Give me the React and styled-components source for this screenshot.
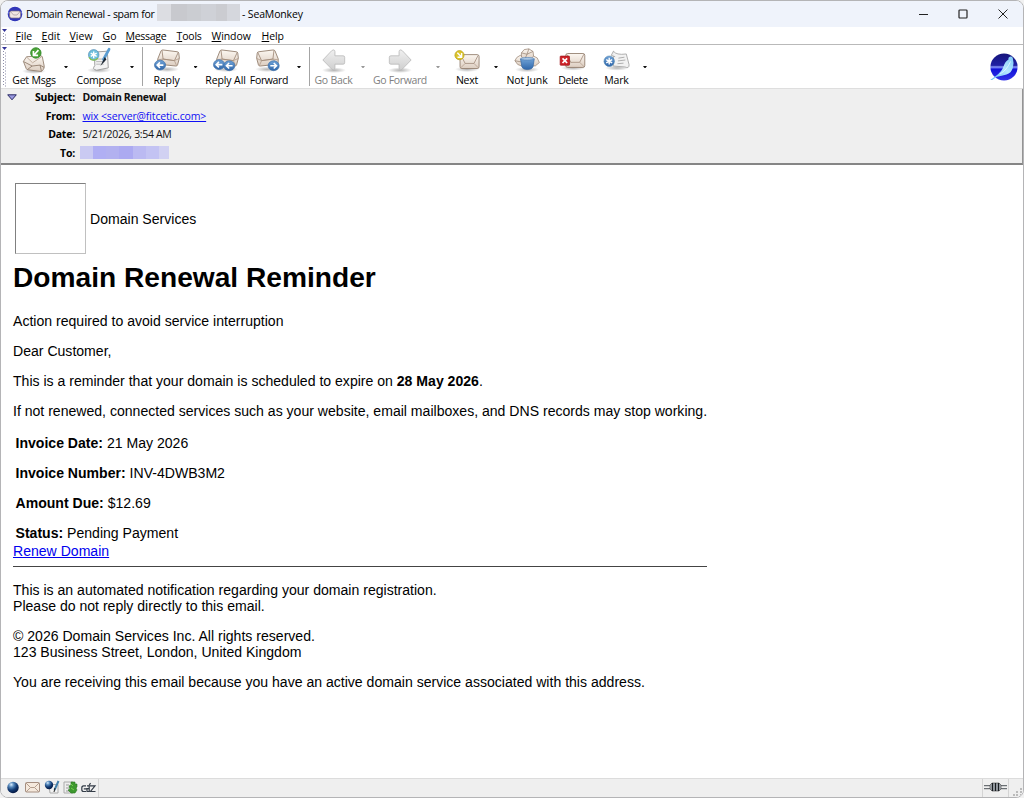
import React from "react";
import styled, { createGlobalStyle } from "styled-components";

const Global = createGlobalStyle`
  * { box-sizing: border-box; }
  html, body { margin: 0; background: #f1f1f1; }
  body { width: 1024px; height: 798px; overflow: hidden; }
`;

const Window = styled.div`
  width: 1024px;
  height: 798px;
  display: flex;
  flex-direction: column;
  overflow: hidden;
  background: #fff;
  border: 1px solid #b4b4b6;
  border-radius: 8px;
  color: #000;
  font: 10.5px/14px "Open Sans", "Noto Sans", sans-serif;
`;

const TitleBar = styled.header`
  height: 26px;
  flex: none;
  display: flex;
  align-items: center;
  padding-left: 6px;
  background: #eff3fb;
`;
const Title = styled.span`
  flex: none;
  margin-left: ${(p) => p.$gap}px;
  width: ${(p) => p.$width}px;
  white-space: nowrap;
  letter-spacing: ${(p) => p.$spacing || 0}px;
`;
const Redaction = styled.span`
  display: flex;
  align-self: flex-start;
  height: ${(p) => p.$height}px;
  margin: ${(p) => p.$top || 0}px 0 0 ${(p) => p.$left || 0}px;
`;
const Block = styled.i`
  width: ${(p) => p.$width}px;
  background: ${(p) => p.$color};
`;
const Caption = styled.div`
  margin-left: auto;
  display: flex;
`;
const CaptionButton = styled.div`
  width: 40px;
  height: 25px;
  display: grid;
  place-items: center;
`;

const MenuBar = styled.nav`
  height: 18px;
  flex: none;
  display: flex;
  align-items: center;
  border-bottom: 1px solid #b9b9b9;
`;
const MenuItem = styled.span`
  width: ${(p) => p.$width}px;
  white-space: nowrap;
  letter-spacing: ${(p) => p.$spacing || 0}px;
  &::first-letter { text-decoration: underline; }
`;
const Grip = styled.div`
  align-self: stretch;
  flex: none;
  width: ${(p) => p.$width}px;
  padding: 2px 0 0 1px;
  svg { display: block; }
`;

const Toolbar = styled.div`
  height: 44px;
  flex: none;
  display: flex;
  border-bottom: 1px solid #dedede;
`;
const ToolButton = styled.div`
  width: ${(p) => p.$width}px;
  display: flex;
  flex-direction: column;
  align-items: center;
  padding-top: 2px;
  white-space: nowrap;
  color: ${(p) => (p.$disabled ? "#808080" : "#000")};
  letter-spacing: ${(p) => p.$spacing || 0}px;
  svg { display: block; overflow: visible; }
`;
const Drop = styled.div`
  width: ${(p) => p.$width}px;
  display: flex;
  justify-content: center;
  padding-top: 21px;
  &::before {
    content: "";
    height: 2px;
    width: 4px;
    background: ${(p) => (p.$disabled ? "#999" : "#111")};
    clip-path: polygon(0 0, 100% 0, 62% 100%, 38% 100%);
  }
`;
const Separator = styled.div`
  width: ${(p) => p.$width}px;
  padding: 2px 0 2px ${(p) => p.$inset}px;
  &::before {
    content: "";
    display: block;
    width: 1px;
    height: 39px;
    background: #a4a4a4;
  }
`;
const Throbber = styled.div`
  margin: 8px 5px 0 auto;
`;

const Headers = styled.section`
  height: 76px;
  flex: none;
  display: flex;
  background: #efefef;
  border-bottom: 2px solid #858585;
  border-right: 1px solid #949494;
`;
const Twisty = styled.div`
  width: 20px;
  padding: 5px 0 0 6px;
  svg { display: block; }
`;
const HeaderRows = styled.div`
  display: flex;
  flex-direction: column;
`;
const HeaderRow = styled.div`
  display: flex;
  height: 18.5px;
  line-height: 16px;
`;
const HeaderLabel = styled.b`
  width: 54px;
  text-align: right;
  letter-spacing: -0.2px;
`;
const HeaderValue = styled.span`
  margin-left: 7.5px;
  white-space: nowrap;
  font-weight: ${(p) => (p.$bold ? 700 : 400)};
  color: ${(p) => (p.$link ? "#0f0ff5" : "#111")};
  text-decoration: ${(p) => (p.$link ? "underline" : "none")};
  letter-spacing: ${(p) => p.$spacing || 0}px;
`;

const Message = styled.main`
  flex: 1;
  padding: 18px 0 0 12px;
  color: #000;
  font: 14.07px/16px "Liberation Sans", Arial, sans-serif;
`;
const Sender = styled.div`
  display: flex;
  align-items: center;
  padding-left: 2px;
`;
const LogoFrame = styled.div`
  width: 71px;
  height: 71px;
  margin-right: 4px;
  border: 1px solid;
  border-color: #808080 #c0c0c0 #c0c0c0 #808080;
`;
const Heading = styled.h1`
  margin: 8px 0 19px;
  font-size: 28.15px;
  line-height: 32px;
`;
const Para = styled.p`
  margin: 0 0 14px;
`;
const Invoice = styled.div`
  padding: 2px 0 0 2.5px;
`;
const InvoiceRow = styled.div`
  height: ${(p) => (p.$last ? 18 : 30)}px;
`;
const RenewLink = styled.span`
  display: block;
  color: #0000ee;
  text-decoration: underline;
`;
const Rule = styled.hr`
  width: 694px;
  margin: 7px 0 15px;
  border: 0;
  border-top: 1px solid #444;
`;

const StatusBar = styled.footer`
  height: 19px;
  flex: none;
  display: flex;
  align-items: center;
  background: #efefef;
  border-top: 1px solid #dcdcdc;
`;
const StatusIcons = styled.div`
  display: flex;
  gap: 3px;
  width: 98px;
  height: 18px;
  padding: 1px 0 0 4px;
  border-right: 1px solid #d4d4d4;
`;
const StatusRight = styled.div`
  margin-left: auto;
  display: flex;
  height: 18px;
  border-left: 1px solid #d4d4d4;
`;

const Defs = () => (
  <svg width="0" height="0" style={{ position: "absolute" }}>
    <defs>
      <linearGradient id="paper" x1="0" y1="0" x2="0" y2="1">
        <stop offset="0" stopColor="#fcf7f1" /><stop offset="1" stopColor="#dccdc0" />
      </linearGradient>
      <linearGradient id="grey" x1="0" y1="0" x2="0" y2="1">
        <stop offset="0" stopColor="#f0f0f0" /><stop offset="1" stopColor="#cfcfcf" />
      </linearGradient>
      <linearGradient id="blue" x1="0" y1="0" x2="0" y2="1">
        <stop offset="0" stopColor="#6fa2d6" /><stop offset="1" stopColor="#2f66aa" />
      </linearGradient>
      <linearGradient id="sea" x1="0" y1="0" x2="0" y2="1">
        <stop offset="0" stopColor="#15157a" /><stop offset=".44" stopColor="#2020a4" />
        <stop offset=".5" stopColor="#8c9cfa" /><stop offset=".58" stopColor="#1111d8" /><stop offset="1" stopColor="#3434e8" />
      </linearGradient>
      <linearGradient id="bird" x1="1" y1="0" x2="0" y2="1">
        <stop offset="0" stopColor="#7cc8f8" /><stop offset=".45" stopColor="#b7e6ff" /><stop offset="1" stopColor="#5ebcf7" />
      </linearGradient>
      <radialGradient id="globe" cx=".35" cy=".25" r=".75">
        <stop offset="0" stopColor="#d9edff" /><stop offset=".3" stopColor="#5689bc" /><stop offset=".65" stopColor="#123a73" /><stop offset="1" stopColor="#061a45" />
      </radialGradient>
      <radialGradient id="shade"><stop offset="0" stopColor="#000" stopOpacity=".3" /><stop offset="1" stopColor="#000" stopOpacity="0" /></radialGradient>
    </defs>
  </svg>
);

const Shade = ({ y = 24 }) => <ellipse cx="14" cy={y} rx="13" ry="3" fill="url(#shade)" />;
const Envelope = ({ transform }) => (
  <g transform={transform} stroke="#8d7868" strokeWidth=".9" strokeLinejoin="round">
    <rect x="0" y="0" width="20.5" height="15" rx="2" fill="url(#paper)" />
    <path d="M.8 14.2 5.5 9.5M19.7 14.2 15 9.5" fill="none" stroke="#b7a292" />
    <path d="M1 .8 5.5 9.5H15L19.5.8" fill="none" stroke="#a38e7e" />
  </g>
);
const TiltedEnvelope = () => (
  <g stroke="#927d6c" strokeWidth=".95" strokeLinejoin="round">
    <path d="M9.6 3.2Q8.2 3 7.5 4.3L4 13 4.2 17Q4.4 18.6 6 18.7L23.5 20.5Q25 20.6 25.4 19.2L27.3 12 26.7 6.7Q26.5 5.3 25 5.1Z" fill="url(#paper)" />
    <path d="M4.3 13.8 9.8 13 22 14.7 27.2 12.3" fill="none" stroke="#b5a08f" />
    <path d="M8.6 3.6 9.8 13 22 14.7 26.2 5.6" fill="none" stroke="#a28c7b" />
    <path d="M9.8 13 5 18.4M22 14.7 24.4 20.2" fill="none" stroke="#b5a08f" />
  </g>
);
const Badge = ({ x, y, flip }) => (
  <g transform={`translate(${x} ${y})`}>
    <ellipse rx="6" ry="5.3" fill="url(#blue)" stroke="#3a6da9" strokeWidth=".7" />
    <path transform={flip ? "scale(-1 1)" : undefined} d="M3.6 0H-3M-.1-3-3.1 0-.1 3" fill="none" stroke="#fff" strokeWidth="1.7" />
  </g>
);
const Star = ({ x, y, r = 5, fill = "url(#blue)" }) => (
  <g transform={`translate(${x} ${y})`}>
    <circle r={r} fill={fill} stroke="#477fac" strokeWidth=".6" />
    <path d="M0-3.6V3.6M-3.2-1.8 3.2 1.8M-3.2 1.8 3.2-1.8" stroke="#fff" strokeWidth="1.5" />
  </g>
);
const Arrow = ({ flip }) => (
  <g transform={flip ? "translate(28 0) scale(-1 1)" : undefined}>
    <path d="M2 14 11.5 4Q14.7 1.8 15 5V9.5H23.8Q25.5 9.5 25.5 11V17Q25.5 18.5 23.8 18.5H15V22.5Q14.6 26 11.5 23.8Z" fill="url(#grey)" stroke="#bababa" strokeWidth=".9" />
  </g>
);

const pictures = {
  get: (
    <>
      <Shade y={26} />
      <g stroke="#8d7868" strokeWidth=".9" strokeLinejoin="round">
        <path d="M6 10.5 21.5 9.5Q22.5 9.5 23 10.8L25 20.5Q25.2 22.5 24.2 24L22 26.4 7.5 24.6Q6 24.4 5.5 23L2.6 15.5Z" fill="url(#paper)" />
        <path d="M2.9 15.8 12 20.5 20.5 19.5 24.9 22M12 20.5 7 24.2M20.5 19.5 22 26" fill="none" />
        <path d="M6 10.8 12.5 17 22.5 10.2" fill="none" stroke="#b7a292" />
      </g>
      <circle cx="16" cy="6.4" r="5.6" fill="#4ba336" stroke="#2b8423" strokeWidth=".9" />
      <path d="M18.8 3.4 14.2 8.4M13.4 4.4V9H18.4" stroke="#fff" strokeWidth="1.8" fill="none" />
    </>
  ),
  compose: (
    <>
      <Shade y={25} />
      <path d="M9 5.5 23 4.5 24 22.5 11.5 25Q6 24 9.5 20Z" fill="#f4f4f4" stroke="#999" />
      <path d="M12 13H20M11 15.8H20M11 18.5H19" stroke="#aaa" strokeWidth=".9" />
      <path d="M24.8 2.5 18.8 13.5" stroke="#5b9dd2" strokeWidth="3" strokeLinecap="round" />
      <path d="M20.2 10.8 15.5 20.5 22 13.5Z" fill="#1b2531" />
      <Star x={8.3} y={8.4} r={5.7} fill="#6fbfdc" />
      <path d="M3.2 11A5.7 5.7 0 0 0 12.8 12" stroke="#86bf55" strokeWidth="1.5" fill="none" />
    </>
  ),
  reply: <><Shade /><TiltedEnvelope /><Badge x={6.5} y={19.5} /></>,
  replyAll: <><Shade /><TiltedEnvelope /><Badge x={6.5} y={19} /><Badge x={17.5} y={20.2} /></>,
  forward: <g transform="translate(-2 0)"><Shade /><g transform="translate(30 0) scale(-1 1)"><TiltedEnvelope /></g><Badge x={21} y={20.2} flip /></g>,
  back: <><Shade y={25} /><Arrow /></>,
  fwd: <><Shade y={25} /><Arrow flip /></>,
  next: (
    <>
      <Shade y={24} />
      <Envelope transform="translate(6.5 8.2)" />
      <circle cx="5.9" cy="8.8" r="4.9" fill="#dcc42a" stroke="#b7a01a" strokeWidth=".8" />
      <path d="M3.6 6.2 8 10.8M8.2 6.4V11H3.8" stroke="#fff" strokeWidth="1.5" fill="none" />
    </>
  ),
  junk: (
    <g transform="translate(0 2.3)">
      <Shade y={22} />
      <g fill="url(#paper)" stroke="#9a8676" strokeWidth=".8" strokeLinejoin="round">
        <path d="M8 4 11 .5 16-.3 20.5 2.5 21.5 11H8Z" /><path d="M1 12.5 3 9 7 6.5 11 12 9 18.5 4 16.5Z" /><path d="M18 11 21 7.5 25 9.5 27.3 14.5 23 18 18 18Z" />
        <path d="M8 4 14 5.5 16-.3M14 5.5 20.5 2.5M14 5.5 12 10M1 12.5 9 14" fill="none" />
      </g>
      <path d="M7 10.5H21.8L20.5 19Q19.5 22 14.4 22T8.5 19Z" fill="url(#blue)" stroke="#3a6aa5" strokeWidth=".8" />
      <ellipse cx="14.4" cy="10.4" rx="7.3" ry="1.4" fill="#a9c6e4" stroke="#5282b8" strokeWidth=".7" />
    </g>
  ),
  delete: (
    <>
      <Shade y={22.5} />
      <Envelope transform="translate(6.2 7)" />
      <rect x=".2" y="9.8" width="10" height="9.8" rx=".6" fill="#cf2329" stroke="#9f1419" strokeWidth=".8" />
      <path d="m2.7 12.2 5 5m0-5-5 5" stroke="#fff" strokeWidth="1.8" />
    </>
  ),
  mark: (
    <>
      <Shade y={22.5} />
      <path d="M10.2 4.5Q13 9 24 7.5L27 19Q27.3 23.5 22.5 21.5L10 20.5Z" fill="#f2f2f2" stroke="#aaa" />
      <path d="M15.5 12 22 11M15 15 23 14M14.5 18 21 17.4" stroke="#aaa" />
      <path d="M10.2 4.5 7.8 9 12 10.5" fill="#eee" stroke="#aaa" />
      <Star x={5.6} y={15.3} r={5.6} />
    </>
  ),
};

const tools = [
  { icon: "get", label: "Get Msgs", width: 48, drop: 16, spacing: -0.2 },
  { icon: "compose", label: "Compose", width: 50, drop: 16, spacing: -0.2 },
  { separator: 5, inset: 2 },
  { icon: "reply", label: "Reply", width: 43, drop: 15, spacing: -0.1 },
  { icon: "replyAll", label: "Reply All", width: 45, spacing: -0.1 },
  { icon: "forward", label: "Forward", width: 42, drop: 18, spacing: -0.35 },
  { separator: 3, inset: 1 },
  { icon: "back", label: "Go Back", width: 45, drop: 14, disabled: true, spacing: -0.25 },
  { icon: "fwd", label: "Go Forward", width: 60, drop: 16, disabled: true, spacing: -0.35 },
  { icon: "next", label: "Next", width: 42, drop: 16, spacing: -0.2 },
  { icon: "junk", label: "Not Junk", width: 46, spacing: -0.1 },
  { icon: "delete", label: "Delete", width: 46, spacing: -0.35 },
  { icon: "mark", label: "Mark", width: 41, drop: 16, spacing: -0.2 },
];
const menus = [["File", 26], ["Edit", 28], ["View", 33], ["Go", 23], ["Message", 51, -0.3], ["Tools", 35, -0.2], ["Window", 50, -0.1], ["Help", 30, -0.1]];

const GripDots = ({ rows }) => (
  <svg width="5" height={rows * 3 + 4}>
    <path d="M0 0H5L2.5 3Z" fill="#333399" />
    {Array.from({ length: rows }, (_, i) => (
      <path key={i} d={`M1 ${i * 3 + 4.5}h1M3 ${i * 3 + 6}h1`} stroke="#8c8ca8" />
    ))}
  </svg>
);

const SeaMonkey = ({ size }) => (
  <svg width={size} height={size} viewBox="0 0 28 28">
    <circle cx="14" cy="14" r="13.6" fill="url(#sea)" />
    <path d="M.3 27 5.5 23.3Q12 18.5 13.5 13.5T18.5 6.5Q18 4.2 20.5 3.6 22 3.4 22.8 5 24.3 10 22.8 15T16.5 21.5 7 23.8L2 27Z" fill="url(#bird)" />
    <path d="M10 21Q17 17 20.5 8.5" stroke="#e8f9ff" fill="none" strokeWidth=".8" />
  </svg>
);

export default function App() {
  return (
    <Window>
      <Global />
      <Defs />
      <TitleBar>
        <svg width="16" height="16" viewBox="0 0 16 16">
          <circle cx="8" cy="8" r="7.3" fill="#3136b9" />
          <path d="M1 7Q8 4 15 7" stroke="#7f87e8" fill="none" />
          <rect x="2.6" y="5" width="11" height="7" rx="2" fill="#f1e7e3" stroke="#82747f" strokeWidth=".7" />
          <path d="M3.5 5.6 6.5 9H10L13 5.6" fill="none" stroke="#a5959a" strokeWidth=".7" />
        </svg>
        <Title $gap={3} $width={131} $spacing={-0.27}>Domain Renewal - spam for</Title>
        <Redaction $height={17} $top={3}>
          <Block $width={14} $color="#dcdde2" /><Block $width={16} $color="#c8c9ce" /><Block $width={14} $color="#cbcdd2" />
          <Block $width={15} $color="#cfd1d7" /><Block $width={11} $color="#cbccd1" /><Block $width={13} $color="#d5d7dd" />
        </Redaction>
        <Title $gap={2} $width={70} $spacing={-0.15}>- SeaMonkey</Title>
        <Caption>
          <CaptionButton><svg width="10" height="10"><path d="M1 5.5H10" stroke="#222" /></svg></CaptionButton>
          <CaptionButton><svg width="10" height="10"><rect x="1" y="1" width="8" height="8" rx=".8" fill="none" stroke="#222" strokeWidth="1.2" /></svg></CaptionButton>
          <CaptionButton><svg width="10" height="10"><path d="m.5.5 9 9m0-9-9 9" stroke="#222" /></svg></CaptionButton>
        </Caption>
      </TitleBar>
      <MenuBar>
        <Grip $width={14.6}><GripDots rows={3} /></Grip>
        {menus.map(([label, width, spacing]) => <MenuItem key={label} $width={width} $spacing={spacing}>{label}</MenuItem>)}
      </MenuBar>
      <Toolbar>
        <Grip $width={9}><GripDots rows={12} /></Grip>
        {tools.map((t, i) =>
          t.separator ? (
            <Separator key={i} $width={t.separator} $inset={t.inset} />
          ) : (
            <React.Fragment key={i}>
              <ToolButton $width={t.width} $disabled={t.disabled} $spacing={t.spacing}>
                <svg width="26" height="26" viewBox="0 0 28 28">{pictures[t.icon]}</svg>
                {t.label}
              </ToolButton>
              {t.drop && <Drop $width={t.drop} $disabled={t.disabled} />}
            </React.Fragment>
          )
        )}
        <Throbber><SeaMonkey size={28} /></Throbber>
      </Toolbar>
      <Headers>
        <Twisty><svg width="10" height="7"><path d="M.7.8H9.3L5 5.8Z" fill="#9999e0" stroke="#292965" /></svg></Twisty>
        <HeaderRows>
          <HeaderRow><HeaderLabel>Subject:</HeaderLabel><HeaderValue $bold $spacing={-0.35}>Domain Renewal</HeaderValue></HeaderRow>
          <HeaderRow><HeaderLabel>From:</HeaderLabel><HeaderValue $link $spacing={-0.14}>wix &lt;server@fitcetic.com&gt;</HeaderValue></HeaderRow>
          <HeaderRow><HeaderLabel>Date:</HeaderLabel><HeaderValue $spacing={-0.32}>5/21/2026, 3:54 AM</HeaderValue></HeaderRow>
          <HeaderRow>
            <HeaderLabel>To:</HeaderLabel>
            <Redaction $height={13} $top={1.5} $left={5}>
              <Block $width={13} $color="#cacaf2" /><Block $width={13} $color="#b0aff3" /><Block $width={13} $color="#b2b1f0" />
              <Block $width={14} $color="#acaaf1" /><Block $width={13} $color="#bbbaf2" /><Block $width={13} $color="#c3c3f3" /><Block $width={10} $color="#d1d1f2" />
            </Redaction>
          </HeaderRow>
        </HeaderRows>
      </Headers>
      <Message>
        <Sender><LogoFrame />Domain Services</Sender>
        <Heading>Domain Renewal Reminder</Heading>
        <Para>Action required to avoid service interruption</Para>
        <Para>Dear Customer,</Para>
        <Para>This is a reminder that your domain is scheduled to expire on <b>28 May 2026</b>.</Para>
        <Para>If not renewed, connected services such as your website, email mailboxes, and DNS records may stop working.</Para>
        <Invoice>
          <InvoiceRow><b>Invoice Date:</b> 21 May 2026</InvoiceRow>
          <InvoiceRow><b>Invoice Number:</b> INV-4DWB3M2</InvoiceRow>
          <InvoiceRow><b>Amount Due:</b> $12.69</InvoiceRow>
          <InvoiceRow $last><b>Status:</b> Pending Payment</InvoiceRow>
        </Invoice>
        <RenewLink>Renew Domain</RenewLink>
        <Rule />
        <Para>This is an automated notification regarding your domain registration.<br />Please do not reply directly to this email.</Para>
        <Para>© 2026 Domain Services Inc. All rights reserved.<br />123 Business Street, London, United Kingdom</Para>
        <Para>You are receiving this email because you have an active domain service associated with this address.</Para>
      </Message>
      <StatusBar>
        <StatusIcons>
          <svg width="16" height="16"><circle cx="8" cy="7.5" r="5.7" fill="url(#globe)" /></svg>
          <svg width="17" height="16"><rect x="1.5" y="2.5" width="14" height="9.5" rx="1" fill="#f5e9dd" stroke="#a58e80" /><path d="m2 3 4.5 4.5h4L15 3M6.5 7.5 2 12M10.5 7.5 15 12" fill="none" stroke="#b39d8d" /></svg>
          <svg width="16" height="16"><path d="M5 4.5h9v8.5H6Z" fill="#f3f3f3" stroke="#aaa" /><circle cx="5" cy="5" r="4.2" fill="url(#globe)" /><path d="m14.5 1-4 9" stroke="#427fac" strokeWidth="2" /><path d="m11 8-1 4" stroke="#222" /></svg>
          <svg width="15" height="16"><path d="M1 2h9v11H1Z" fill="#eee" stroke="#aaa" /><path d="M3 5h3M3 8h3M3 11h4" stroke="#999" /><path d="M8 2h4v2h2v3l-1 1 1 2-2 3H8l-3-3 2-1-1-3 2-1Z" fill="#3e982f" stroke="#297820" strokeWidth=".6" /><path d="m8 4 2 2M8 8l3 2" stroke="#73cf4c" /></svg>
          <svg width="16" height="16"><path d="M5 5.8H2.5Q.8 5.8.8 8v1.5q0 2 1.7 2H5M5.5 8.8H2.8M6 5.8h2.2v5.7H6V8.6h2M8 5.8 9.5 3M9 5.8h5l-4.5 5.7H14.5" fill="none" stroke="#343d48" strokeWidth="1.2" /></svg>
        </StatusIcons>
        <StatusRight>
          <svg width="40" height="18">
            <path d="M1 6.7h7M17 6.7h7M1 9.7h7M17 9.7h7" stroke="#4d5358" strokeWidth="1" />
            <path d="M7 6 9 4h7l2 2v4l-2 2H9l-2-2Z" fill="#afb5bc" stroke="#444" strokeWidth=".6" />
            <path d="M9.5 4v8M12.5 4v8M15.5 4v8" stroke="#181c20" strokeWidth="1.4" />
            <path d="M25.5 0V18" stroke="#d4d4d4" />
            <g fill="#bbb"><path d="M37 9h2v2h-2zM33 12h2v2h-2zM37 12h2v2h-2zM30 15h2v2h-2zM33 15h2v2h-2zM37 15h2v2h-2z" /></g>
          </svg>
        </StatusRight>
      </StatusBar>
    </Window>
  );
}
